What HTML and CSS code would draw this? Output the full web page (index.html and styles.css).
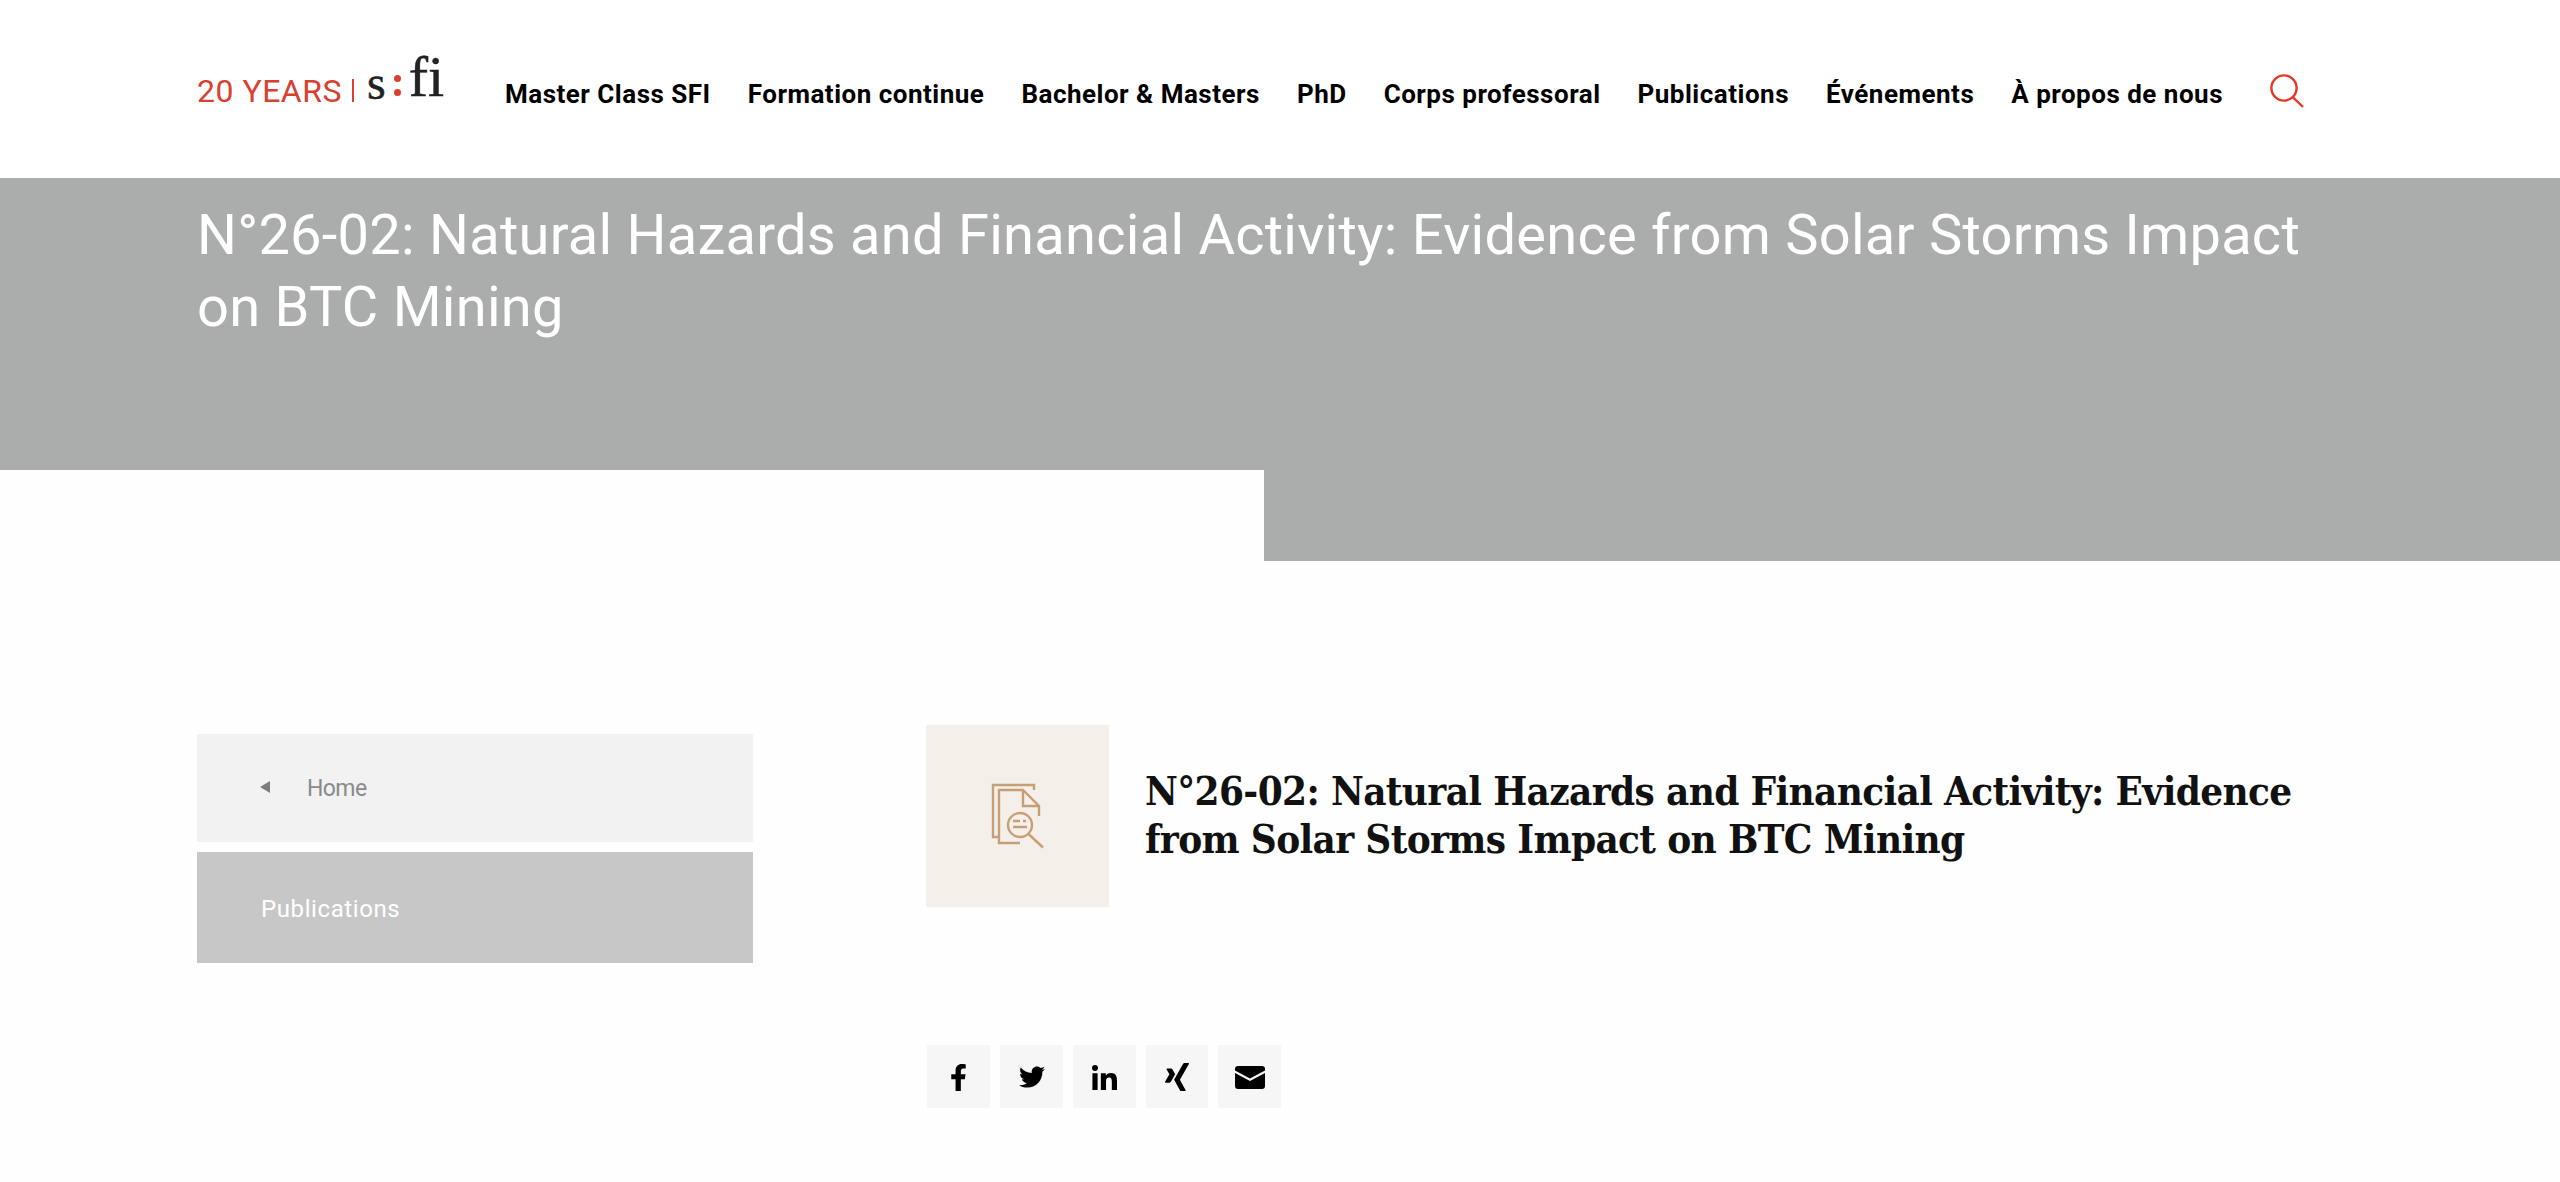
FILE: index.html
```html
<!DOCTYPE html>
<html lang="fr">
<head>
<meta charset="utf-8">
<title>N°26-02: Natural Hazards and Financial Activity</title>
<link rel="stylesheet" href="styles.css">
</head>
<body>
<header class="site-header">
  <a class="logo" href="#">
    <span class="logo-years">20 YEARS</span>
    <span class="logo-rule"></span>
    <span class="logo-sfi">s<span class="logo-colon"><i></i><i></i></span><span class="logo-fi">fi</span></span>
  </a>
  <nav class="main-nav">
    <a href="#">Master Class SFI</a>
    <a href="#">Formation continue</a>
    <a href="#">Bachelor &amp; Masters</a>
    <a href="#">PhD</a>
    <a href="#">Corps professoral</a>
    <a href="#">Publications</a>
    <a href="#">Événements</a>
    <a href="#">À propos de nous</a>
  </nav>
  <svg class="search-icon" viewBox="0 0 34 34" aria-label="Rechercher">
    <circle cx="14" cy="14" r="12.6" fill="none" stroke="#e8382a" stroke-width="2.4"/>
    <path d="M23 23.4L33 33" fill="none" stroke="#e8382a" stroke-width="2.4"/>
  </svg>
</header>

<section class="hero">
  <h1>N°26-02: Natural Hazards and Financial Activity: Evidence from Solar Storms Impact on BTC Mining</h1>
</section>
<div class="hero-step"></div>

<div class="page-body">
  <aside class="side-nav">
    <a class="side-home" href="#"><span class="side-arrow"></span>Home</a>
    <a class="side-current" href="#">Publications</a>
  </aside>
  <main class="content">
    <div class="title-row">
      <div class="doc-tile">
        <svg class="doc-icon" viewBox="0 0 56 68" fill="none" stroke="#c79f76" stroke-width="2.400">
          <path d="M9 55H3V3H44V8"/>
          <path d="M30 61H9V8H33L49 24V34"/>
          <path d="M33 8V24H49"/>
          <circle cx="30" cy="43" r="12"/>
          <path d="M38.5 52L53 65.500"/>
          <path d="M23 39H30M33 39H36M23 45H37"/>
        </svg>
      </div>
      <h2>N°26-02: Natural Hazards and Financial Activity: Evidence from Solar Storms Impact on BTC Mining</h2>
    </div>
    <div class="share-row">
      <a class="share" href="#"><svg class="i-f" viewBox="0 0 320 512"><path d="M279.14 288l14.22-92.66h-88.91v-60.13c0-25.35 12.42-50.06 52.24-50.06h40.42V6.26S260.43 0 225.36 0c-73.22 0-121.08 44.38-121.08 124.72v70.62H22.89V288h81.39v224h100.17V288z"/></svg></a>
      <a class="share" href="#"><svg class="i-t" viewBox="0 0 512 512"><path d="M459.37 151.716c.325 4.548.325 9.097.325 13.645 0 138.72-105.583 298.558-298.558 298.558-59.452 0-114.68-17.219-161.137-47.106 8.447.974 16.568 1.299 25.34 1.299 49.055 0 94.213-16.568 130.274-44.832-46.132-.975-84.792-31.188-98.112-72.772 6.498.974 12.995 1.624 19.818 1.624 9.421 0 18.843-1.3 27.614-3.573-48.081-9.747-84.143-51.98-84.143-102.985v-1.299c13.969 7.797 30.214 12.67 47.431 13.319-28.264-18.843-46.781-51.005-46.781-87.391 0-19.492 5.197-37.36 14.294-52.954 51.655 63.675 129.3 105.258 216.365 109.807-1.624-7.797-2.599-15.918-2.599-24.04 0-57.828 46.782-104.934 104.934-104.934 30.213 0 57.502 12.67 76.67 33.137 23.715-4.548 46.456-13.32 66.599-25.34-7.798 24.366-24.366 44.833-46.132 57.827 21.117-2.273 41.584-8.122 60.426-16.243-14.292 20.791-32.161 39.308-52.628 54.253z"/></svg></a>
      <a class="share" href="#"><svg class="i-in" viewBox="0 0 448 448"><path d="M100.28 448H7.4V148.9h92.88zM53.79 108.1C24.09 108.1 0 83.5 0 53.8a53.79 53.79 0 0 1 107.58 0c0 29.7-24.1 54.3-53.79 54.3zM447.9 448h-92.68V302.4c0-34.7-.7-79.2-48.29-79.2-48.29 0-55.69 37.7-55.69 76.7V448h-92.78V148.9h89.08v40.8h1.3c12.4-23.5 42.69-48.3 87.88-48.3 94 0 111.28 61.9 111.28 142.3V448z"/></svg></a>
      <a class="share narrow" href="#"><svg class="i-x" viewBox="0 32 384 448"><path d="M162.7 210c-1.8 3.3-25.2 44.4-70.1 123.5-4.9 8.3-10.8 12.5-17.7 12.5H9.8c-7.7 0-12.1-7.5-8.5-14.4l69-121.3c.2 0 .2-.1 0-.3l-43.9-75.6c-4.3-7.8.3-14.1 8.5-14.1H100c7.3 0 13.3 4.1 18 12.2l44.7 77.5zM382.6 46.1l-144 253v.3L330.2 466c3.9 7.1.2 14.1-8.5 14.1h-65.2c-7.6 0-13.6-4-18-12.2l-92.4-168.5c3.3-5.8 51.5-90.8 144.8-255.2 4.6-8.1 10.4-12.2 17.5-12.2h65.7c8-.1 12.3 6.700 8.5 14.1z"/></svg></a>
      <a class="share" href="#"><svg class="i-m" viewBox="0 0 30 23"><path d="M3 0H27a3 3 0 0 1 3 3V4.500L15 12.500 0 4.500V3a3 3 0 0 1 3-3z"/><path d="M0 7L15 15 30 7V20a3 3 0 0 1-3 3H3a3 3 0 0 1-3-3z"/></svg></a>
    </div>
  </main>
</div>
</body>
</html>
```
FILE: styles.css
```css
* { box-sizing: border-box; }
html, body { margin: 0; padding: 0; }
body {
  background: #fefefe;
  font-family: "Roboto", "Liberation Sans", sans-serif;
  color: #000;
  min-height: 1182px;
  overflow: hidden;
}
a { text-decoration: none; color: inherit; }

.site-header {
  height: 178px;
  background: #fff;
  display: flex;
  align-items: flex-start;
  padding-left: 197px;
}
.logo {
  display: flex;
  align-items: flex-end;
  height: 106px;
  width: 308px;
  flex: none;
}
.logo-years {
  font-size: 32px;
  line-height: 30px;
  font-weight: 400;
  letter-spacing: 0.5px;
  color: #d8402f;
  white-space: nowrap;
  width: 155px;
}
.logo-rule {
  width: 2px;
  height: 23px;
  margin-bottom: 4px;
  background: #d8402f;
  margin-right: 13px;
  flex: none;
}
.logo-sfi {
  font-family: "Liberation Serif", serif;
  font-size: 48px;
  line-height: 48px;
  color: #222;
  display: flex;
  align-items: flex-end;
  height: 48px;
  margin-bottom: -1px;
  -webkit-text-stroke: 0.5px #222;
}
.logo-colon {
  width: 23px;
  height: 21px;
  margin-bottom: 11px;
  display: flex;
  flex-direction: column;
  justify-content: space-between;
  align-items: center;
}
.logo-colon i {
  width: 7px;
  height: 7px;
  border-radius: 50%;
  background: #d8402f;
}
.logo-fi {
  font-size: 58px;
  line-height: 58px;
  margin-bottom: 1px;
}
.main-nav {
  display: flex;
  gap: 37px;
  margin-top: 76px;
  font-size: 26px;
  line-height: 36px;
  font-weight: 700;
  white-space: nowrap;
  letter-spacing: 0.5px;
}
.search-icon {
  width: 34px;
  height: 34px;
  margin-left: 47px;
  margin-top: 74px;
  flex: none;
}

.hero {
  height: 292px;
  background: #abadac;
  padding: 21px 220px 0 197px;
}
.hero h1 {
  margin: 0;
  font-size: 56px;
  line-height: 72px;
  font-weight: 400;
  color: #fff;
  letter-spacing: 0.26px;
}
.hero-step {
  width: 1296px;
  height: 91px;
  margin-left: auto;
  background: #abadac;
}

.page-body {
  display: flex;
  padding: 164px 0 0 197px;
}
.side-nav {
  width: 556px;
  margin-top: 9px;
  flex: none;
  display: flex;
  flex-direction: column;
  gap: 10px;
}
.side-home, .side-current {
  display: flex;
  align-items: center;
}
.side-home {
  height: 108px;
  padding-left: 63px;
  background: #f2f2f2;
  color: #8a8a8a;
  font-size: 23px;
  letter-spacing: -0.6px;
}
.side-arrow {
  width: 0;
  height: 0;
  border-style: solid;
  border-width: 6px 10px 6px 0;
  border-color: transparent #7d7d7d transparent transparent;
  margin-right: 37px;
  margin-bottom: 2px;
}
.side-current {
  height: 111px;
  padding: 2px 0 0 64px;
  background: #c7c7c7;
  color: #fff;
  font-size: 24px;
  letter-spacing: 0.6px;
}
.content {
  margin-left: 173px;
  width: 1240px;
}
.title-row {
  display: flex;
  align-items: center;
  gap: 36px;
}
.doc-tile {
  width: 183px;
  height: 182px;
  background: #f4efe9;
  display: flex;
  align-items: center;
  justify-content: center;
  flex: none;
}
.doc-icon {
  width: 56px;
  height: 68px;
}
.title-row h2 {
  margin: 0 0 2px;
  font-family: "DejaVu Serif Condensed", "DejaVu Serif", serif;
  font-size: 40px;
  line-height: 48px;
  font-weight: 700;
  letter-spacing: -0.65px;
  color: #111;
  width: 1165px;
  flex: none;
}
.share-row {
  display: flex;
  gap: 10px;
  margin-top: 138px;
  margin-left: 1px;
}
.share {
  width: 63px;
  height: 63px;
  background: #f6f6f6;
  display: flex;
  align-items: center;
  justify-content: center;
}
.share.narrow { width: 62px; }
.share svg { fill: #000; display: block; }
.i-f { height: 27px; width: 17px; margin-top: 2px; }
.i-t { height: 26px; width: 26px; margin-top: 1px; }
.i-in { height: 25px; width: 25px; margin-top: 1px; }
.i-x { height: 28px; width: 24px; margin-top: 1px; }
.i-m { height: 23px; width: 30px; margin-top: 1px; }
```
